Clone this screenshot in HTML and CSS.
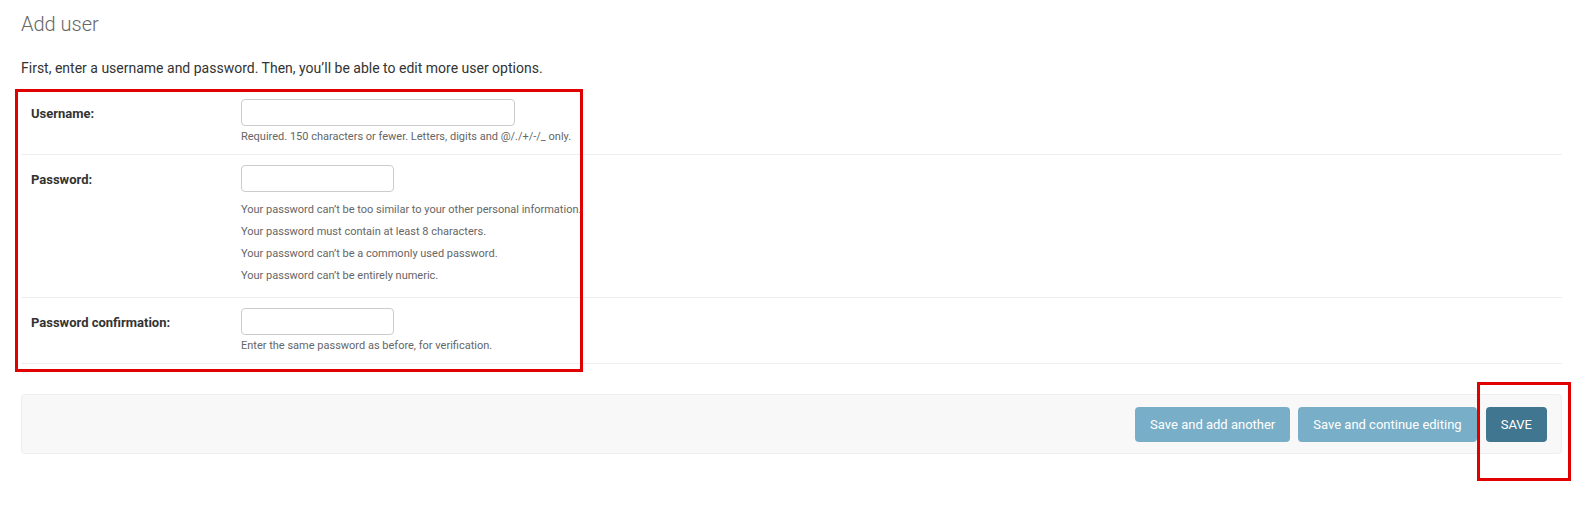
FILE: index.html
```html
<!DOCTYPE html>
<html lang="en">
<head>
<meta charset="utf-8">
<title>Add user</title>
<link rel="stylesheet" href="styles.css">
</head>
<body>
<div class="content">
  <h1 class="title">Add user</h1>
  <p class="intro">First, enter a username and password. Then, you’ll be able to edit more user options.</p>
  <form class="user-form">
    <div class="form-row">
      <label class="field-label" for="id_username">Username:</label>
      <div class="field-body">
        <input class="text-input wide" type="text" id="id_username">
        <div class="help">Required. 150 characters or fewer. Letters, digits and @/./+/-/_ only.</div>
      </div>
    </div>
    <div class="form-row">
      <label class="field-label" for="id_password1">Password:</label>
      <div class="field-body">
        <input class="text-input" type="password" id="id_password1">
        <ul class="help-list">
          <li>Your password can’t be too similar to your other personal information.</li>
          <li>Your password must contain at least 8 characters.</li>
          <li>Your password can’t be a commonly used password.</li>
          <li>Your password can’t be entirely numeric.</li>
        </ul>
      </div>
    </div>
    <div class="form-row">
      <label class="field-label" for="id_password2">Password confirmation:</label>
      <div class="field-body">
        <input class="text-input" type="password" id="id_password2">
        <div class="help">Enter the same password as before, for verification.</div>
      </div>
    </div>
    <div class="submit-row">
      <button type="button" class="btn btn-light">Save and add another</button>
      <button type="button" class="btn btn-light">Save and continue editing</button>
      <button type="button" class="btn btn-primary">SAVE</button>
    </div>
  </form>
</div>
<div class="annot annot-form"></div>
<div class="annot annot-save"></div>
</body>
</html>
```

FILE: styles.css
```css
html, body {
  margin: 0;
  padding: 0;
  background: #fff;
}
body {
  font-family: Roboto, "Liberation Sans", Arial, sans-serif;
  color: #333;
  position: relative;
  min-height: 526px;
}
.content {
  padding: 12px 19px 0 21px;
}
.title {
  margin: 0;
  font-size: 20px;
  line-height: 24px;
  font-weight: 300;
  color: #666;
}
.intro {
  margin: 22px 0 0;
  font-size: 14px;
  line-height: 20px;
  color: #333;
}
.user-form {
  margin-top: 11px;
}
.form-row {
  display: flex;
  padding: 10px;
  border-bottom: 1px solid #eee;
}
.field-label {
  width: 210px;
  flex: none;
  font-size: 13px;
  font-weight: 700;
  color: #333;
  padding-top: 7px;
  line-height: 16px;
}
.field-body {
  display: flex;
  flex-direction: column;
  align-items: flex-start;
}
.text-input {
  box-sizing: border-box;
  width: 153px;
  height: 27px;
  border: 1px solid #ccc;
  border-radius: 4px;
  background: #fff;
  margin: 0;
  padding: 2px 6px;
  font: inherit;
}
.text-input.wide {
  width: 274px;
}
.help {
  margin-top: 3px;
  font-size: 11px;
  line-height: 15px;
  color: #666;
}
.help-list {
  list-style: none;
  margin: 7px 0 0;
  padding: 0;
  font-size: 11px;
  line-height: 22px;
  color: #666;
}
.submit-row {
  margin-top: 30px;
  display: flex;
  justify-content: flex-end;
  gap: 8px;
  padding: 12px 14px 11px;
  background: #f8f8f8;
  border: 1px solid #eee;
  border-radius: 4px;
}
.btn {
  height: 35px;
  padding: 0 15px;
  border: none;
  border-radius: 4px;
  color: #fff;
  font-family: Roboto, "Liberation Sans", Arial, sans-serif;
  font-size: 13px;
  line-height: 15px;
  cursor: pointer;
}
.btn-light {
  background: #79aec8;
}
.btn-primary {
  background: #417690;
  margin-left: 1px;
}
.annot {
  position: absolute;
  box-sizing: border-box;
  border: 3px solid #e00000;
  pointer-events: none;
}
.annot-form {
  left: 15px;
  top: 89px;
  width: 568px;
  height: 283px;
}
.annot-save {
  left: 1477px;
  top: 382px;
  width: 94px;
  height: 99px;
}
```
